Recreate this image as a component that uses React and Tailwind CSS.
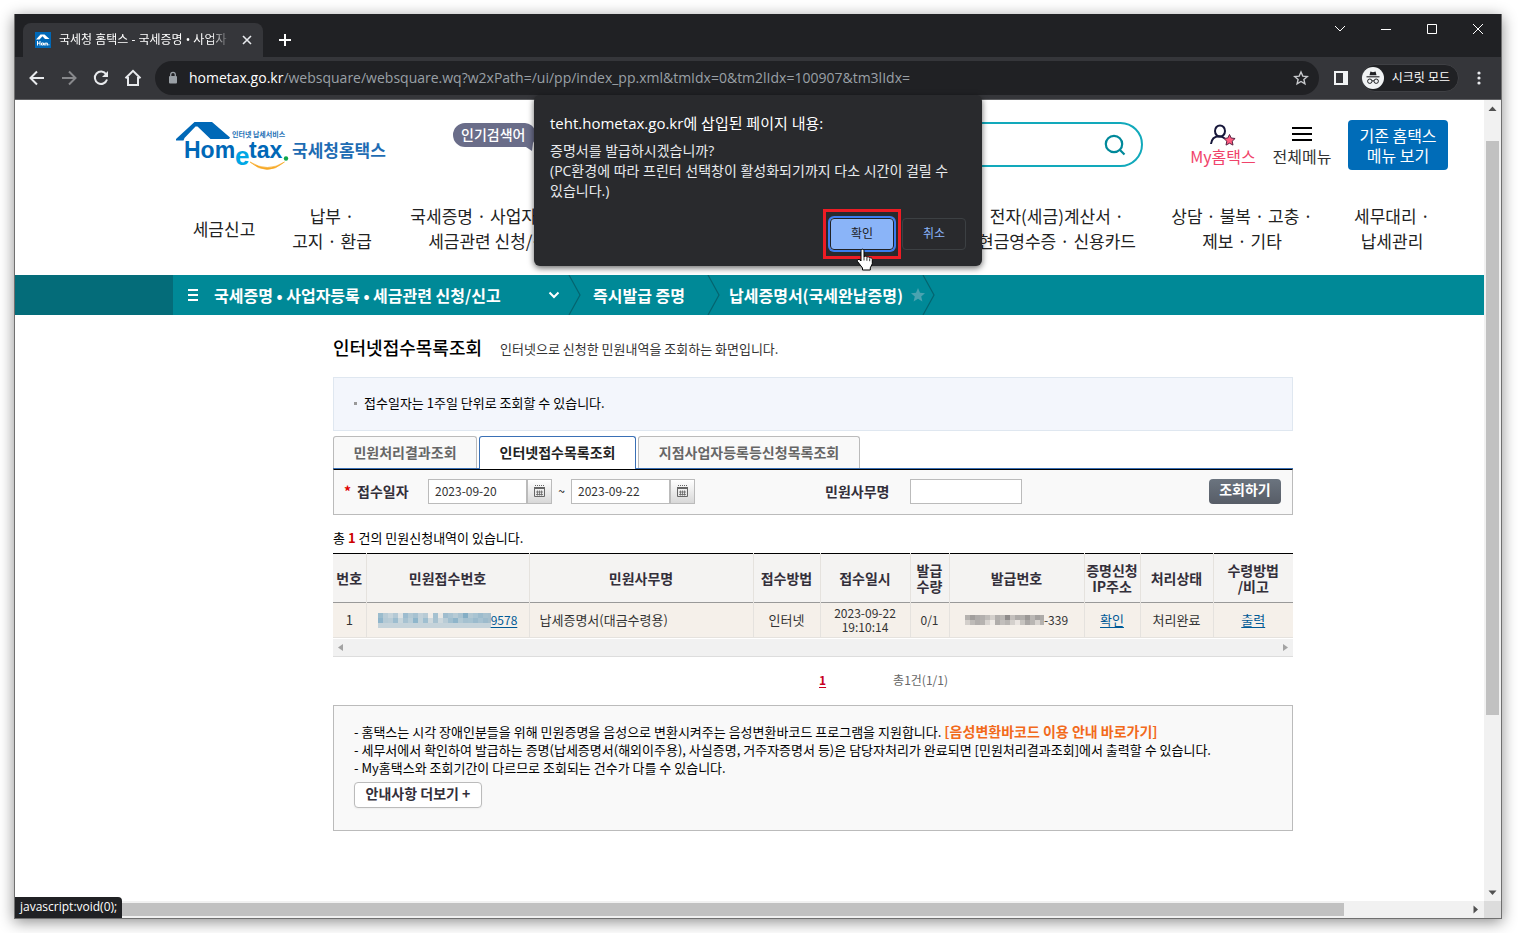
import React from "react";

const KR = "font-['Noto_Sans_CJK_KR',sans-serif]";
const UI = "font-['Open_Sans','Noto_Sans_CJK_KR',sans-serif]";

const LINK_MOSAIC = [
  ["#9bbccd", "#b9ccd6", "#c6d4db", "#b4c9d5", "#dfe3e4", "#9dbccf", "#b3c9d4", "#a7c2d1", "#c2d1d9", "#b8cbd5", "#efece8", "#a5c1d0", "#e9e8e5", "#a0bdce", "#aac4d2", "#b7cbd5", "#a9c3d1", "#85aec5", "#b2c8d3", "#a9c4d2", "#9dbccd", "#a9c2cf", "#a6c0ce"],
  ["#8fb5cb", "#b5cad5", "#b9ccd6", "#9dbdcf", "#c8d6dc", "#a7c2d1", "#b9cdd7", "#8fb6cb", "#c2d2d9", "#9fbfd0", "#cfd9dd", "#a8c2d0", "#cdd8dd", "#b9ccd6", "#a1bfcf", "#8fb5ca", "#b2c9d4", "#a5c1d0", "#a7c3d1", "#9bbbcd", "#a7c2d1", "#9dbbcc", "#a6bfcc"],
];

const NO_MOSAIC = [
  ["#b5b2af", "#a19e9c", "#aeaba9", "#b3b0ae", "#c0bdba", "#d4d0cc", "#b2afad", "#bab7b4", "#8f8c8b", "#c3bfbc", "#aeaba9", "#b2afac", "#9b9896", "#bab7b4", "#a5a2a0", "#aeaba8"],
  ["#d3cfcb", "#bebbb8", "#b1aeac", "#b6b3b0", "#d9d5d1", "#eeeae5", "#b0adaa", "#c2bfbc", "#b9b6b3", "#d4d0cc", "#eae5e1", "#c7c4c0", "#aaa7a5", "#b9b6b3", "#d8d4d0", "#b5b2af"],
];

function Mosaic({ rows, label, width, height, base }) {
  return (
    <svg width={width} height={height} role="img" aria-label={label} className="shrink-0" shapeRendering="crispEdges">
      {base && <rect width={width} height={height} fill={base} />}
      {rows.map((row, y) =>
        row.map((fill, x) => <rect key={`${x}-${y}`} x={x * 5} y={y * 5} width="5" height="5" fill={fill} />)
      )}
    </svg>
  );
}

function Triangle({ points, fill = "#505050" }) {
  return (
    <svg width="17" height="17" viewBox="0 0 17 17" aria-hidden="true">
      <path d={points} fill={fill} />
    </svg>
  );
}

function TabStrip() {
  return (
    <div className="flex h-[43px] items-end bg-[#202124] text-white">
      <div className="flex h-[34px] w-60 items-center rounded-t-lg bg-[#35363a] pr-2 pl-3 ml-2">
        <svg width="16" height="16" viewBox="0 0 16 16" className="shrink-0" aria-hidden="true">
          <rect width="16" height="16" fill="#0068b7" />
          <path d="M1 7.5 5.5 2.5h4L14.5 7H10L7.5 4.2 4.5 7.5z" fill="#fff" />
          <path d="M2.5 9v4.5M5 9v4.5M2.5 11.2H5M6.5 11h2v2h-2zM9.7 13.5v-2.4h1.2v2.4M11 11.1h1.4v2.4M13.4 12.8h1" stroke="#fff" strokeWidth="1" fill="none" />
        </svg>
        <span className="ml-2 h-5 flex-1 overflow-hidden text-xs leading-5 whitespace-nowrap [mask-image:linear-gradient(to_right,#000_88%,transparent)]">
          국세청 홈택스 - 국세증명 • 사업자
        </span>
        <button aria-label="탭 닫기" className="ml-2 flex size-4 items-center justify-center">
          <svg width="10" height="10" viewBox="0 0 10 10" stroke="#e8eaed" strokeWidth="1.6"><path d="M1 1l8 8M9 1l-8 8" /></svg>
        </button>
      </div>
      <button aria-label="새 탭" className="mb-[3px] ml-2 flex size-7 items-center justify-center">
        <svg width="12" height="12" viewBox="0 0 12 12" stroke="#fff" strokeWidth="2"><path d="M6 0v12M0 6h12" /></svg>
      </button>
      <div className="ml-auto flex self-start">
        {[
          ["탭 검색", "M1 3l5 5 5-5"],
          ["최소화", "M1 6.5h10"],
          ["최대화", "M1.5 1.5h9v9h-9z"],
          ["닫기", "M1 1l10 10M11 1L1 11"],
        ].map(([label, d]) => (
          <button key={label} aria-label={label} className="flex h-[30px] w-[46px] items-center justify-center">
            <svg width="12" height="12" viewBox="0 0 12 12" fill="none" stroke="#fff"><path d={d} /></svg>
          </button>
        ))}
      </div>
    </div>
  );
}

function Toolbar() {
  const icon = "flex size-8 shrink-0 items-center justify-center";
  return (
    <div className="flex h-[43px] items-center border-b border-[#5f6063] bg-[#35363a] px-[6px]">
      <button aria-label="뒤로" className={icon}>
        <svg width="16" height="16" viewBox="0 0 16 16" fill="none" stroke="#e8eaed" strokeWidth="2"><path d="M15 8H2M8 1.5 1.5 8 8 14.5" /></svg>
      </button>
      <button aria-label="앞으로" className={icon}>
        <svg width="16" height="16" viewBox="0 0 16 16" fill="none" stroke="#87888b" strokeWidth="2"><path d="M1 8h13M8 1.5 14.5 8 8 14.5" /></svg>
      </button>
      <button aria-label="새로고침" className={icon}>
        <svg width="16" height="16" viewBox="0 0 16 16" fill="none" stroke="#e8eaed" strokeWidth="2"><path d="M13.2 4.2A6.2 6.2 0 1 0 14 9.5" /><path d="M15 1v6H9z" fill="#e8eaed" stroke="none" /></svg>
      </button>
      <button aria-label="홈" className={icon}>
        <svg width="18" height="18" viewBox="0 0 18 18" fill="none" stroke="#e8eaed" strokeWidth="2"><path d="M1.5 9.2 9 1.8l7.5 7.4M4 8v8h10V8" /></svg>
      </button>
      <div className="ml-[6px] flex h-[34px] min-w-0 flex-1 items-center rounded-full bg-[#202124] pr-2 pl-3">
        <svg width="12" height="14" viewBox="0 0 12 14" className="shrink-0" aria-hidden="true">
          <rect x="2" y="5" width="8" height="7.5" rx="1" fill="#9aa0a6" />
          <path d="M3.7 5.5V3.6a2.3 2.3 0 0 1 4.6 0v1.9" fill="none" stroke="#9aa0a6" strokeWidth="1.3" />
        </svg>
        <div className="ml-[10px] min-w-0 flex-1 truncate text-sm leading-5 text-[#9aa0a6]">
          <span className="text-white">hometax.go.kr</span>/websquare/websquare.wq?w2xPath=/ui/pp/index_pp.xml&amp;tmIdx=0&amp;tm2lIdx=100907&amp;tm3lIdx=
        </div>
        <button aria-label="북마크에 추가" className="flex size-5 items-center justify-center">
          <svg width="16" height="16" viewBox="0 0 16 16" fill="none" stroke="#c8cacd" strokeWidth="1.4"><path d="m8 2 1.8 4.1 4.5.4-3.4 3 1 4.4L8 11.5l-3.9 2.4 1-4.4-3.4-3 4.5-.4z" /></svg>
        </button>
      </div>
      <button aria-label="측면 패널" className="ml-[6px] flex size-8 items-center justify-center">
        <svg width="14" height="14" viewBox="0 0 14 14" shapeRendering="crispEdges"><rect x="1" y="1" width="12" height="12" fill="none" stroke="#f1f3f4" strokeWidth="2" /><rect x="9" width="5" height="14" fill="#f1f3f4" /></svg>
      </button>
      <button className="ml-1 flex h-7 items-center rounded-full border border-[#3f4044] bg-[#202124] pr-2 text-xs whitespace-nowrap text-white">
        <svg width="22" height="22" viewBox="0 0 22 22" aria-hidden="true">
          <circle cx="11" cy="11" r="11" fill="#f1f3f4" />
          <path d="M7.5 8.3 8.4 4.6l2.6.6 2.6-.6.9 3.7z" fill="#202124" />
          <path d="M4.5 9.8h13" stroke="#202124" strokeWidth="1.1" />
          <g fill="none" stroke="#202124"><circle cx="7.8" cy="14.2" r="2.2" /><circle cx="14.2" cy="14.2" r="2.2" /><path d="M10 14q1-.6 2 0" /></g>
        </svg>
        <span className="ml-2 leading-5">시크릿 모드</span>
      </button>
      <button aria-label="메뉴" className="ml-1 flex size-8 items-center justify-center">
        <svg width="4" height="14" viewBox="0 0 4 14" fill="#e8eaed"><circle cx="2" cy="2" r="1.6" /><circle cx="2" cy="7" r="1.6" /><circle cx="2" cy="12" r="1.6" /></svg>
      </button>
    </div>
  );
}

function Logo() {
  return (
    <svg width="220" height="60" viewBox="0 0 220 60" role="img" aria-label="Hometax 국세청홈택스" className="shrink-0">
      <path d="M4 24.5V23L22.500 6h17.500L58 21.500 57 23H38.500L25.500 10.500h-2L12.500 22l-1 2.500z" fill="#0068b7" />
      <g className="font-['Liberation_Sans',sans-serif] font-bold" fill="#0068b7">
        <text x="12" y="42" fontSize="23">Hom</text>
        <text x="63" y="49" fontSize="26" fill="#00a7e5">e</text>
        <text x="77" y="42" fontSize="23">tax</text>
      </g>
      <circle cx="114" cy="42.5" r="2.2" fill="#0ea64b" />
      <path d="M78 46q17 15 34.500 0-17 11-34.500 0z" fill="#f7a823" stroke="#f7a823" strokeWidth=".6" />
      <g className="font-['Noto_Sans_CJK_KR',sans-serif] font-bold">
        <text x="60" y="21" fontSize="7" fill="#1b6fb5">인터넷 납세서비스</text>
        <text x="120" y="41" fontSize="17" fill="#1e6cb3">국세청홈택스</text>
      </g>
    </svg>
  );
}

const GNB = [
  ["세금신고"],
  ["납부 ·", "고지 · 환급"],
  ["국세증명 · 사업자등록 ·", "세금관련 신청/신고"],
  [],
  ["전자(세금)계산서 ·", "현금영수증 · 신용카드"],
  ["상담 · 불복 · 고충 ·", "제보 · 기타"],
  ["세무대리 ·", "납세관리"],
];

function SiteHeader() {
  return (
    <header className="bg-white">
      <div className="flex pt-4 pl-[157px]">
        <Logo />
        <div className="mt-[7px] ml-[61px]">
          <svg width="84" height="30" viewBox="0 0 84 30" role="img" aria-label="인기검색어">
            <path d="M12 0h60a12 12 0 0 1 8 20l-1 8-6-4H12a12 12 0 0 1 0-24z" fill="#6a6d89" />
            <text x="8" y="17" fontSize="14" fill="#fff" className="font-['Noto_Sans_CJK_KR',sans-serif] font-medium">인기검색어</text>
          </svg>
        </div>
        <form className="mt-[6px] ml-3 flex h-[45px] w-[594px] items-center rounded-full border-2 border-[#12a9bb] pr-[15px]">
          <input aria-label="검색어" className="h-full min-w-0 flex-1 bg-transparent pl-6 outline-none" />
          <button type="button" aria-label="검색">
            <svg width="22" height="22" viewBox="0 0 22 22" fill="none" stroke="#00899a" strokeWidth="2.2"><circle cx="10" cy="10" r="8.2" /><path d="m15.5 15.5 5 5" /></svg>
          </button>
        </form>
        <div className="flex pl-[45px] text-base leading-5">
          <a href="#my" className="flex w-[70px] flex-col items-center pt-2 whitespace-nowrap text-[#f0436a]">
            <svg width="28" height="24" viewBox="0 0 28 24" className="-mb-[2px] shrink-0" fill="none" aria-hidden="true">
              <ellipse cx="11" cy="7" rx="5" ry="5.6" stroke="#17173a" strokeWidth="2" />
              <path d="M2 20c.5-4.500 3.500-7.600 8-7.800 2.200 0 4.200.7 5.600 2.200" stroke="#17173a" strokeWidth="2" />
              <path d="m20.500 10.500 1.700 3.500 3.900.5-2.900 2.700.8 3.900-3.500-1.900-3.500 1.900.8-3.900-2.900-2.700 3.900-.5z" fill="#ff5c7f" stroke="#5a2344" />
            </svg>
            My홈택스
          </a>
          <button className="ml-[9px] flex w-[70px] flex-col items-center pt-[11px] whitespace-nowrap text-[#333]">
            <svg width="20" height="14" viewBox="0 0 20 14" stroke="#000" strokeWidth="2" className="mb-[5px]" shapeRendering="crispEdges" aria-hidden="true"><path d="M0 1h20M0 7h20M0 13h20" /></svg>
            전체메뉴
          </button>
          <button className="mt-1 ml-[11px] flex h-[50px] w-[100px] flex-col items-center justify-center rounded bg-[#006cb8] text-white">
            <span>기존 홈택스</span>
            <span>메뉴 보기</span>
          </button>
        </div>
      </div>
      <nav className="mt-[22px] grid h-[77px] grid-cols-[102px_114px_214px_354px_200px_170px_130px] pt-[5px] pl-[158px] text-center text-[17px] leading-[25px] whitespace-nowrap text-[#222]">
        {GNB.map((lines, i) => (
          <a key={i} href={`#menu-${i}`} className="flex h-[50px] flex-col justify-center">
            {lines.map((l) => <span key={l}>{l}</span>)}
          </a>
        ))}
      </nav>
    </header>
  );
}

function Divider() {
  return (
    <svg width="13" height="40" viewBox="0 0 13 40" fill="none" aria-hidden="true">
      <path d="M1 0l11 20L1 40" stroke="#04646f" strokeWidth="1.200" />
    </svg>
  );
}

function Breadcrumb() {
  return (
    <nav className="flex h-10 bg-[#008997] text-base font-bold whitespace-nowrap text-white">
      <div className="w-[158px] bg-[#046c79]" />
      <div className="flex w-[395px] items-center pr-2 pl-[15px]">
        <svg width="10" height="12" viewBox="0 0 10 12" stroke="#fff" strokeWidth="2" shapeRendering="crispEdges" aria-hidden="true"><path d="M0 1h10M0 6h10M0 11h10" /></svg>
        <a href="#certificate" className="ml-4">국세증명 • 사업자등록 • 세금관련 신청/신고</a>
        <button aria-label="메뉴 펼치기" className="ml-auto">
          <svg width="12" height="8" viewBox="0 0 12 8" fill="none" stroke="#fff" strokeWidth="2"><path d="M1.500 1.500 6 6l4.500-4.500" /></svg>
        </button>
      </div>
      <Divider />
      <a href="#issue" className="flex w-[126px] items-center pl-3">즉시발급 증명</a>
      <Divider />
      <div className="flex w-[202px] items-center pl-[9px]">
        <a href="#tax-certificate">납세증명서(국세완납증명)</a>
        <button aria-label="즐겨찾기" className="ml-2">
          <svg width="14" height="14" viewBox="0 0 14 14" fill="#4aa3b0"><path d="m7 0 2 4.800 5 .4-3.800 3.300L11.400 13.500 7 10.800l-4.400 2.700 1.200-5L0 5.200l5-.4z" /></svg>
        </button>
      </div>
      <Divider />
    </nav>
  );
}

function DateField({ id, label, value }) {
  return (
    <span className="flex font-normal">
      <input id={id} aria-label={label} defaultValue={value} className="h-[25px] w-[99px] border border-[#bbb] bg-white pb-[2px] pl-[6px] text-xs text-[#333]" />
      <button type="button" aria-label={`${label} 달력`} className="flex h-[25px] w-[25px] items-center justify-center border border-[#bbb] bg-linear-to-b from-white to-[#d8d8d8]">
        <svg width="11" height="12" viewBox="0 0 11 12" fill="none" stroke="#666" aria-hidden="true">
          <path d="M1 .5h10" strokeDasharray="1 1" /><path d="M.5 3.500h10v8H.5z" /><path d="M0 3h11" strokeWidth="2" />
          <path d="M2 7h7M2 9.500h7M3.500 5.500v5M5.500 5.500v5M7.500 5.500v5" strokeWidth=".8" />
        </svg>
      </button>
    </span>
  );
}

function SearchPanel() {
  const tab = "h-8 shrink-0 rounded-t-[3px] border border-b-0 pb-[2px] text-sm font-bold whitespace-nowrap";
  return (
    <>
      <div role="tablist" className="mt-[5px] flex gap-[2px] border-b border-[#3a70b5]">
        <button role="tab" className={`${tab} w-36 border-[#bbb] bg-[#f9f9f9] text-[#666]`}>민원처리결과조회</button>
        <button role="tab" aria-selected="true" className={`${tab} -mb-px h-[33px] w-[157px] border-[#3a70b5] bg-white text-[#222]`}>인터넷접수목록조회</button>
        <button role="tab" className={`${tab} w-[222px] border-[#bbb] bg-[#f9f9f9] text-[#666]`}>지점사업자등록등신청목록조회</button>
      </div>
      <form className="flex h-[46px] items-center border border-t-[#000] border-[#bbb] bg-[#f9f9f9] pr-[11px] pb-[2px] pl-[10px] text-sm font-bold whitespace-nowrap text-[#332f3a]">
        <label htmlFor="from" className="w-[84px]"><span className="mr-[6px] text-[#e00000]">*</span>접수일자</label>
        <DateField id="from" label="접수 시작일" value="2023-09-20" />
        <span className="w-[19px] text-center text-xs font-normal text-black">~</span>
        <DateField id="to" label="접수 종료일" value="2023-09-22" />
        <label htmlFor="task" className="ml-[130px] w-[85px]">민원사무명</label>
        <input id="task" className="h-[25px] w-28 border border-[#bbb] bg-white px-2 text-xs font-normal" />
        <button type="button" className="ml-auto h-[25px] w-[72px] rounded-sm bg-linear-to-b from-[#6b747f] to-[#575d67] pb-1 text-sm leading-5 text-white">조회하기</button>
      </form>
    </>
  );
}

const COLS = [
  ["번호", "w-[33px]"],
  ["민원접수번호", "w-[163px]"],
  ["민원사무명", "w-[224px]"],
  ["접수방법", "w-[67px]"],
  ["접수일시", "w-[90px]"],
  ["발급\n수량", "w-[39px]"],
  ["발급번호", "w-[135px]"],
  ["증명신청\nIP주소", "w-[56px]"],
  ["처리상태", "w-[73px]"],
  ["수령방법\n/비고", "w-[80px]"],
];

function Results() {
  const link = "text-[#005a96] underline underline-offset-2";
  const cell = "border-r border-[#e5e2de] last:border-r-0";
  return (
    <section>
      <p className="mt-[13px] text-[13px] leading-5 text-black">총 <b className="text-[#c00]">1</b> 건의 민원신청내역이 있습니다.</p>
      <table className="mt-[5px] w-full table-fixed border-collapse border-t border-black text-[13px] whitespace-nowrap text-[#333]">
        <thead className="bg-[#f4f3f2] text-sm leading-4 text-[#332f3a]">
          <tr className="h-[49px] border-b border-[#999]">
            {COLS.map(([name, w]) => (
              <th key={name} scope="col" className={`${w} ${cell} p-0 text-center font-bold whitespace-pre`}>{name}</th>
            ))}
          </tr>
        </thead>
        <tbody className="bg-[#f5f0ea] leading-[14px]">
          <tr className="h-[35px] border-b border-[#e5e2de] text-center">
            <td className={cell}>1</td>
            <td className={cell}>
              <a href="#receipt" className="flex items-center justify-center text-[#005a96]">
                <Mosaic rows={LINK_MOSAIC} width={113} height={15} label="가려진 접수번호" base="#c5d3da" />
                <span className="text-xs underline underline-offset-2">9578</span>
              </a>
            </td>
            <td className={`${cell} pl-[10px] text-left`}>납세증명서(대금수령용)</td>
            <td className={cell}>인터넷</td>
            <td className={`${cell} text-xs leading-[14px]`}>2023-09-22<br />19:10:14</td>
            <td className={`${cell} text-xs`}>0/1</td>
            <td className={cell}>
              <span className="flex items-center justify-center text-xs">
                <Mosaic rows={NO_MOSAIC} width={79} height={10} label="가려진 발급번호" />-339
              </span>
            </td>
            <td className={cell}><a href="#check" className={link}>확인</a></td>
            <td className={cell}>처리완료</td>
            <td className={cell}><a href="#print" className={link}>출력</a></td>
          </tr>
        </tbody>
      </table>
      <div className="mt-px flex h-[18px] items-center justify-between border-b border-[#ddd] bg-[#f1f1f1]">
        <Triangle points="M5 8.500 10 5v7z" fill="#a3a3a3" />
        <Triangle points="M12 8.500 7 5v7z" fill="#a3a3a3" />
      </div>
      <div className="mt-[13px] flex items-center pl-[486px] text-xs leading-5 text-[#666]">
        <a href="#page-1" className="font-bold text-[#c8001e] underline underline-offset-2">1</a>
        <span className="ml-[67px]">총1건(1/1)</span>
      </div>
    </section>
  );
}

function Notes() {
  return (
    <section className="mt-[15px] h-[126px] border border-[#bbb] bg-[#f9f9f9] pt-4 pl-5 text-[13px] leading-[18px] text-black">
      <ul>
        <li>- 홈택스는 시각 장애인분들을 위해 민원증명을 음성으로 변환시켜주는 음성변환바코드 프로그램을 지원합니다. <a href="#barcode" className="text-sm leading-[18px] font-bold text-[#f26a1b]">[음성변환바코드 이용 안내 바로가기]</a></li>
        <li>- 세무서에서 확인하여 발급하는 증명(납세증명서(해외이주용), 사실증명, 거주자증명서 등)은 담당자처리가 완료되면 [민원처리결과조회]에서 출력할 수 있습니다.</li>
        <li>- My홈택스와 조회기간이 다르므로 조회되는 건수가 다를 수 있습니다.</li>
      </ul>
      <button className="mt-[5px] h-[26px] w-32 rounded-sm border border-[#bbb] bg-white pb-1 text-sm leading-5 font-bold whitespace-nowrap text-[#332f3a] shadow-xs">안내사항 더보기 +</button>
    </section>
  );
}

function AlertDialog() {
  return (
    <div role="dialog" aria-labelledby="dlg-title" className={`${UI} absolute top-[81px] left-1/2 z-10 flex w-[448px] -translate-x-1/2 flex-col rounded-md bg-[#292a2d] p-4 text-white shadow-[0_2px_6px_rgba(0,0,0,0.6)]`}>
      <h2 id="dlg-title" className="text-[15px] leading-6">teht.hometax.go.kr에 삽입된 페이지 내용:</h2>
      <p className="mt-[6px] text-sm leading-5 break-keep text-[#e8eaed]">
        증명서를 발급하시겠습니까?<br />(PC환경에 따라 프린터 선택창이 활성화되기까지 다소 시간이 걸릴 수 있습니다.)
      </p>
      <div className="mt-[17px] flex justify-end gap-2 text-xs">
        <div className="relative">
          <button className="h-8 w-16 rounded bg-[#8ab4f8] text-[#202124] ring-2 ring-[#3b7cf0] outline outline-[#202124] -outline-offset-1">확인</button>
          <div className="pointer-events-none absolute -inset-x-[7px] -inset-y-[9px] border-3 border-[#ed1c24]" />
          <svg width="18" height="23" viewBox="0 0 18 23" className="absolute top-[30px] left-[26px]" aria-hidden="true">
            <path d="M5 13V2.800C5 .6 8 .6 8 2.800V9c.6-1.400 2.800-1 2.900.4.8-1 2.600-.6 2.800.8 1-.8 2.600-.2 2.600 1.400v4.200l-2 4v2.200H6.500v-2L1.600 13.600c-1-1.800 1.400-3 2.400-1.600z" fill="#fff" stroke="#000" />
            <path d="M8 9v3.500M10.900 9.800v3M13.700 10.800v2.400" stroke="#000" strokeWidth=".8" />
          </svg>
        </div>
        <button className="h-8 w-16 rounded border border-[#3c4043] text-[#8ab4f8]">취소</button>
      </div>
    </div>
  );
}

export default function App() {
  return (
    <div className={`${KR} flex min-h-screen bg-white pt-[14px] pr-4 pb-[14px] pl-[14px]`}>
      <div className="relative flex min-w-0 flex-1 flex-col border border-t-0 border-[#707070] bg-white shadow-[0_3px_14px_rgba(0,0,0,0.45)]">
        <div className={UI}>
          <TabStrip />
          <Toolbar />
        </div>
        <div className="flex flex-1">
          <div className="min-w-0 flex-1 overflow-hidden">
            <SiteHeader />
            <Breadcrumb />
            <main className="ml-[318px] max-w-[960px]">
              <div className="flex items-center pt-5">
                <h1 className="text-lg leading-6 font-medium text-black">인터넷접수목록조회</h1>
                <p className="ml-[18px] pt-1 text-[13px] leading-5 text-[#333]">인터넷으로 신청한 민원내역을 조회하는 화면입니다.</p>
              </div>
              <div className="mt-[18px] flex h-[54px] items-center border border-[#dfe7f0] bg-[#f3f6fc] pb-[2px] pl-5 text-[13px] text-black">
                <span className="mr-[7px] size-[3px] bg-[#999]" />접수일자는 1주일 단위로 조회할 수 있습니다.
              </div>
              <SearchPanel />
              <Results />
              <Notes />
            </main>
          </div>
          <div className="flex w-[17px] flex-col items-center bg-[#f1f1f1]" aria-hidden="true">
            <Triangle points="M8.500 6.500 12.500 11h-8z" />
            <div className="basis-0 grow-[24]" />
            <div className="w-[13px] grow-[574] basis-0 bg-[#c1c1c1]" />
            <div className="basis-0 grow-[169]" />
            <Triangle points="M8.500 11 12.500 6.500h-8z" />
          </div>
        </div>
        <div className="flex h-[17px] items-center bg-[#f1f1f1]" aria-hidden="true">
          <div className="h-[13px] w-[1329px] bg-[#c1c1c1]" />
          <div className="ml-auto"><Triangle points="M11 8.500 6.500 12.500v-8z" /></div>
          <div className="size-[17px] bg-[#dcdcdc]" />
        </div>
        <AlertDialog />
        <div className={`${UI} absolute bottom-0 left-0 h-[21px] rounded-tr bg-[#202124] px-[5px] text-xs leading-5 text-white`}>javascript:void(0);</div>
      </div>
    </div>
  );
}
